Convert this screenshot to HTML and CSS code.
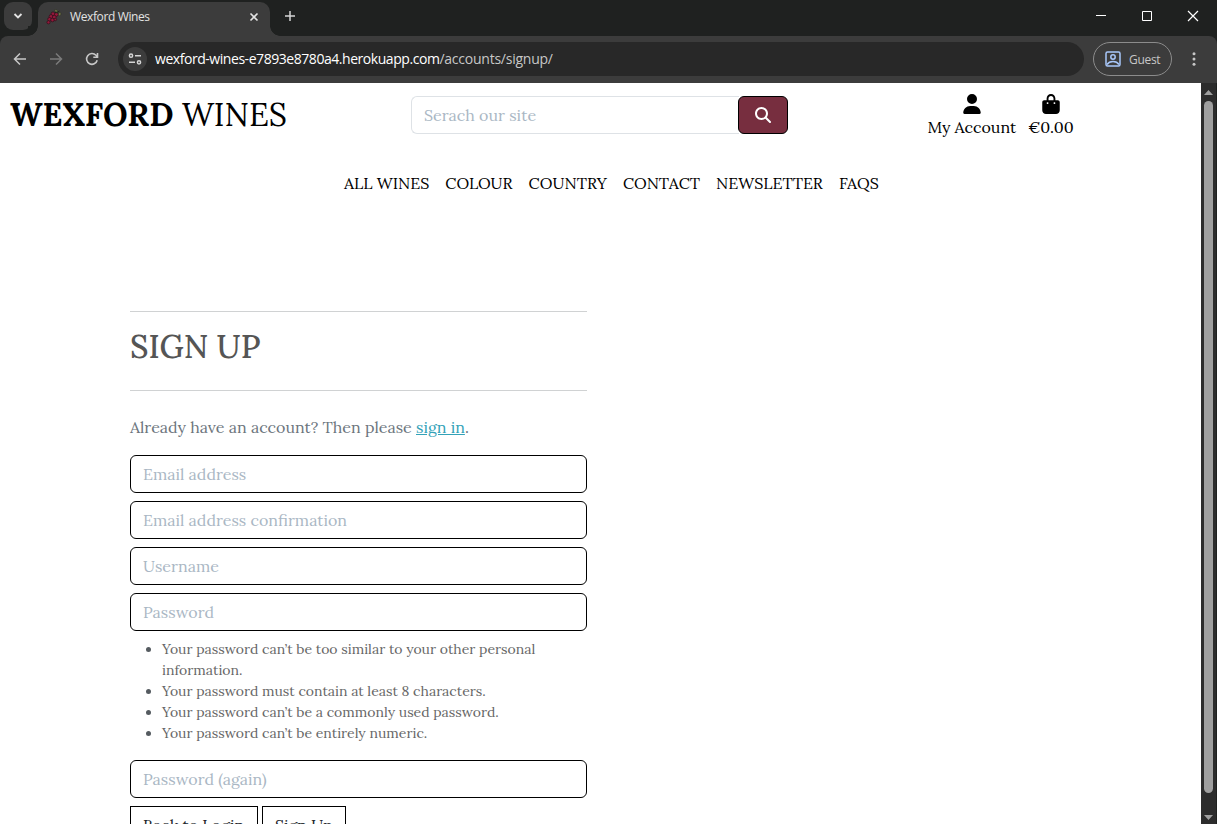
FILE: index.html
```html
<!DOCTYPE html>
<html lang="en">
<head>
<meta charset="utf-8">
<title>Wexford Wines</title>
<link rel="stylesheet" href="styles.css">
</head>
<body>
<div class="browser">
  <div class="tabstrip">
    <div class="tab-search"><svg width="10" height="8" viewBox="0 0 10 8"><path d="M1.5 2 5 5.5 8.5 2" fill="none" stroke="#e3e3e3" stroke-width="1.8"/></svg></div>
    <div class="tab">
      <svg class="favicon" width="16" height="16" viewBox="0 0 16 16">
        <g fill="#94183a" stroke="#35121d" stroke-width=".8"><circle cx="7" cy="4.800" r="1.900"/><circle cx="10.300" cy="5.500" r="1.900"/><circle cx="5" cy="7.500" r="1.900"/><circle cx="8.300" cy="8.200" r="1.900"/><circle cx="3.500" cy="10.300" r="1.800"/><circle cx="6.500" cy="11" r="1.800"/><circle cx="9.300" cy="10.500" r="1.300"/><circle cx="2.500" cy="13.300" r="1.600"/></g>
        <path d="M8.500 1.200c1.500-1.500 3 0 3.500 1.500l-2 1.300zM12.500 4.500c1-1.500 2.500-1.500 2.500.5 0 1.500-1.500 2-2.500 1.500z" fill="#6c7148" stroke="#20241a" stroke-width=".4"/><path d="M9 3.500l3-.5 1.500-1" stroke="#1c2416" fill="none"/>
      </svg>
      <span class="tab-title">Wexford Wines</span>
      <svg width="10" height="10" viewBox="0 0 10 10"><path d="M1.5 1.5l7 7M8.500 1.500l-7 7" stroke="#e3e3e3" stroke-width="1.6"/></svg>
    </div>
    <svg class="new-tab" width="12" height="12" viewBox="0 0 12 12"><path d="M6 1v10M1 6h10" stroke="#d5d5d5" stroke-width="1.5"/></svg>
    <div class="window-controls">
      <svg width="12" height="12" viewBox="0 0 12 12"><path d="M1 5.500h10" stroke="#fff"/></svg>
      <svg width="12" height="12" viewBox="0 0 12 12"><path d="M1.500 1.500h9v9h-9z" stroke="#fff" fill="none"/></svg>
      <svg width="12" height="12" viewBox="0 0 12 12"><path d="M1 1l10 10M11 1L1 11" stroke="#fff" stroke-width="1.2"/></svg>
    </div>
  </div>
  <div class="toolbar">
    <svg width="16" height="16" viewBox="0 0 16 16"><path d="M14 8H2.800M8 2.500L2.500 8 8 13.500" fill="none" stroke="#c7c7c7" stroke-width="1.5"/></svg>
    <svg width="16" height="16" viewBox="0 0 16 16"><path d="M2 8h11.200M8 2.500L13.500 8 8 13.500" fill="none" stroke="#7b7b7b" stroke-width="1.5"/></svg>
    <svg width="16" height="16" viewBox="0 0 16 16"><path d="M13.200 9.300A5.400 5.400 0 1 1 12 4.300L13.500 6M13.500 2v4.200H9.300" fill="none" stroke="#c7c7c7" stroke-width="1.6"/></svg>
    <div class="address">
      <span class="site-info"><svg width="14" height="14" viewBox="0 0 14 14" fill="none" stroke="#d5d5d5" stroke-width="1.500"><circle cx="3" cy="3.700" r="1.600"/><path d="M7 3.700h6M1 10.300h6"/><circle cx="11" cy="10.300" r="1.600"/></svg></span>
      <span class="url"><span class="host">wexford-wines-e7893e8780a4.herokuapp.com</span><span class="path">/accounts/signup/</span></span>
    </div>
    <div class="guest">
      <svg width="16" height="16" viewBox="0 0 16 16" fill="none" stroke="#a8c7fa" stroke-width="1.500"><rect x="1" y="1" width="14" height="14" rx="1.500"/><circle cx="8" cy="6" r="2.200"/><path d="M2 13.500c2.500-4 9.500-4 12 0"/></svg>
      <span>Guest</span>
    </div>
    <svg class="menu" width="4" height="16" viewBox="0 0 4 16" fill="#c7c7c7"><circle cx="2" cy="2.700" r="1.500"/><circle cx="2" cy="8" r="1.500"/><circle cx="2" cy="13.300" r="1.500"/></svg>
  </div>
  <div class="viewport">
    <div class="page">
      <header class="header">
        <a class="brand"><strong>WEXFORD</strong> WINES</a>
        <form class="search">
          <input class="search-input" placeholder="Serach our site">
          <button class="search-button" type="button"><svg width="16" height="16" viewBox="0 0 512 512" fill="#fff"><path d="M416 208c0 45.900-14.900 88.300-40 122.700L502.600 457.400c12.500 12.500 12.500 32.800 0 45.300s-32.800 12.500-45.300 0L330.700 376c-34.400 25.200-76.800 40-122.700 40C93.100 416 0 322.900 0 208S93.100 0 208 0S416 93.100 416 208zM208 352a144 144 0 1 0 0-288 144 144 0 1 0 0 288z"/></svg></button>
        </form>
        <div class="links">
          <a class="link account"><svg width="18" height="20" viewBox="0 0 448 512"><path d="M224 256A128 128 0 1 0 224 0a128 128 0 1 0 0 256zm-45.700 48C79.800 304 0 383.800 0 482.300C0 498.700 13.300 512 29.700 512H418.300c16.400 0 29.700-13.300 29.700-29.700C448 383.800 368.200 304 269.700 304H178.300z"/></svg><span>My Account</span></a>
          <a class="link bag"><svg width="18" height="20" viewBox="0 0 448 512"><path d="M160 112c0-35.300 28.700-64 64-64s64 28.700 64 64v48H160V112zm-48 48H48c-26.500 0-48 21.500-48 48V416c0 53 43 96 96 96H352c53 0 96-43 96-96V208c0-26.500-21.500-48-48-48H336V112C336 50.100 285.900 0 224 0S112 50.100 112 112v48zm24 48a24 24 0 1 1 0 48 24 24 0 1 1 0-48zm152 24a24 24 0 1 1 48 0 24 24 0 1 1 -48 0z"/></svg><span>€0.00</span></a>
        </div>
      </header>
      <nav class="nav">
        <a>ALL WINES</a><a>COLOUR</a><a>COUNTRY</a><a>CONTACT</a><a>NEWSLETTER</a><a>FAQS</a>
      </nav>
      <main class="signup">
        <hr>
        <h2>SIGN UP</h2>
        <hr>
        <p class="intro">Already have an account? Then please <a>sign in</a>.</p>
        <input class="field" placeholder="Email address">
        <input class="field" placeholder="Email address confirmation">
        <input class="field" placeholder="Username">
        <input class="field" placeholder="Password">
        <ul class="hints">
          <li>Your password can’t be too similar to your other personal information.</li>
          <li>Your password must contain at least 8 characters.</li>
          <li>Your password can’t be a commonly used password.</li>
          <li>Your password can’t be entirely numeric.</li>
        </ul>
        <input class="field" placeholder="Password (again)">
        <div class="actions"><a class="back">Back to Login</a><a class="submit">Sign Up</a></div>
      </main>
    </div>
    <div class="scrollbar">
      <svg width="9" height="5" viewBox="0 0 9 5"><path d="M0 5L4.500 0 9 5z" fill="#9f9f9f"/></svg>
      <div class="thumb"></div>
      <svg width="9" height="5" viewBox="0 0 9 5"><path d="M0 0l4.500 5L9 0z" fill="#9f9f9f"/></svg>
    </div>
  </div>
</div>
</body>
</html>
```

FILE: styles.css
```css
* { box-sizing: border-box; }
body { margin: 0; overflow: hidden; background: #1f2120; }
svg { display: block; flex: none; }
.browser { width: 1217px; height: 824px; display: flex; flex-direction: column; overflow: hidden; font-family: "Open Sans", "Noto Sans", sans-serif; }

.tabstrip { height: 36px; flex: none; display: flex; background: #1f2120; padding-left: 4px; }
.tab-search { width: 28px; height: 28px; margin-top: 2px; border-radius: 9px; background: #3c3c3c; display: flex; align-items: center; justify-content: center; }
.tab { position: relative; width: 232px; height: 34px; margin: 2px 0 0 6px; padding: 0 11px 5px 8px; border-radius: 10px 10px 0 0; background: #3c3c3c; display: flex; align-items: center; color: #e3e3e3; font-size: 12px; }
.tab::before, .tab::after { content: ""; position: absolute; bottom: 0; width: 10px; height: 10px; }
.tab::before { left: -10px; background: radial-gradient(circle at 0 0, #1f2120 9.5px, #3c3c3c 10px); }
.tab::after { right: -10px; background: radial-gradient(circle at 100% 0, #1f2120 9.5px, #3c3c3c 10px); }
.tab-title { flex: 1; margin-left: 8px; white-space: nowrap; letter-spacing: -.38px; }
.new-tab { margin: 10px 0 0 14px; }
.window-controls { margin-left: auto; padding: 10px 18px 0 0; display: flex; gap: 34px; }

.toolbar { height: 47px; flex: none; display: flex; align-items: center; background: #3c3c3c; padding: 0 21px 1px 12px; border-radius: 8px 8px 0 0; }
.toolbar > svg { margin-right: 20px; }
.toolbar > svg:nth-child(3) { margin-right: 18px; }
.address { width: 966px; height: 34px; border-radius: 17px; background: #282828; display: flex; align-items: center; padding-left: 5px; }
.site-info { width: 24px; height: 24px; border-radius: 50%; background: #3c3c3c; display: flex; align-items: center; justify-content: center; }
.url { margin-left: 8px; padding-bottom: 1px; font-size: 14px; white-space: nowrap; color: #e3e3e3; }
.host { color: #fff; letter-spacing: -.45px; }
.path { color: #c7c7c7; letter-spacing: -.24px; }
.guest { width: 79px; height: 34px; margin-left: 9px; border: 1px solid #8c8c8c; border-radius: 17px; display: flex; align-items: center; padding-left: 11px; gap: 8px; color: #c7c7c7; font-size: 12px; letter-spacing: -.3px; }
.toolbar > .menu { margin: 0 0 0 20px; }

.viewport { flex: 1; min-height: 0; display: flex; padding-right: 1px; }
.page { flex: 1; background: #fff; overflow: hidden; font-family: Lora, "Liberation Serif", serif; font-size: 16px; line-height: 24px; color: #000; }
.scrollbar { width: 15px; background: #2c2c2c; display: flex; flex-direction: column; align-items: center; padding: 7px 0 4px; }
.thumb { width: 9px; height: 692px; margin: 6px 0 auto; border-radius: 5px; background: #9f9f9f; }

.header { display: flex; height: 88px; padding-left: 10px; white-space: nowrap; }
.brand { width: 401px; padding-top: 12px; font-size: 32px; line-height: 40px; }
.search { display: flex; height: 38px; margin-top: 13px; width: 377px; }
.search-input { width: 328px; border: 1px solid #dee2e6; border-right: 0; border-radius: 6px 0 0 6px; padding: 0 12px; font: inherit; background: #fff; }
input::placeholder { color: #aab7c4; opacity: 1; }
.search-button { width: 50px; margin-left: -1px; padding: 0; border: 1px solid #000; border-radius: 6px; background: #772e3f; display: flex; align-items: center; justify-content: center; }
.links { display: flex; margin-left: 139.5px; gap: 12px; padding-top: 11px; }
.link { display: flex; flex-direction: column; align-items: center; }
.link span { line-height: 24px; margin-top: 1px; }

.nav { display: flex; gap: 16px; margin-left: 344px; white-space: nowrap; }

.signup { width: 457px; margin: 116px 0 0 130px; display: flex; flex-direction: column; }
.signup hr { width: 100%; height: 1px; margin: 0; border: 0; background: #d0d2d3; }
.signup h2 { margin: 16px 0 24px; font-size: 32px; line-height: 38px; font-weight: 500; color: #555; }
.intro { margin: 24px 0 16px; color: #6c757d; white-space: nowrap; }
.intro a { color: #33a2b8; text-decoration: underline; }
.field { width: 100%; height: 38px; flex: none; margin: 0 0 8px; padding: 0 12px; border: 1px solid #000; border-radius: 6px; background: #fff; font: inherit; }
.hints { margin: 0 0 16px; padding-left: 32px; font-size: 14px; line-height: 21px; color: #666; }
.hints li::marker { color: #555b60; }
.actions { display: flex; gap: 4px; color: #212529; white-space: nowrap; }
.actions a { height: 38px; border: 1px solid #000; padding: 6px 12px; }
.back { width: 128px; }
.submit { width: 84px; }
```
